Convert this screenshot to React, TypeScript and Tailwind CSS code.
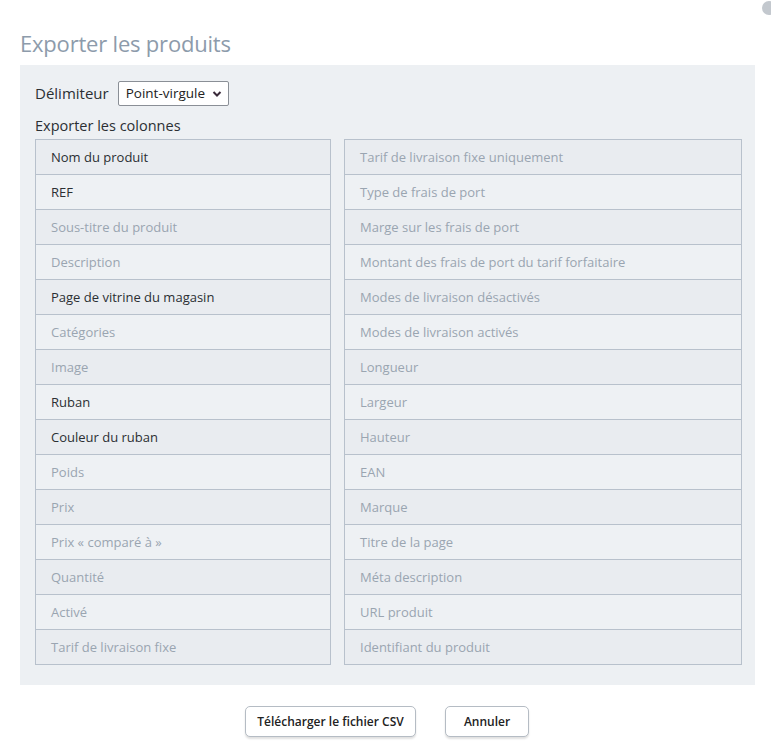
const leftCols = [
  { label: "Nom du produit", on: true },
  { label: "REF", on: true },
  { label: "Sous-titre du produit", on: false },
  { label: "Description", on: false },
  { label: "Page de vitrine du magasin", on: true },
  { label: "Catégories", on: false },
  { label: "Image", on: false },
  { label: "Ruban", on: true },
  { label: "Couleur du ruban", on: true },
  { label: "Poids", on: false },
  { label: "Prix", on: false },
  { label: "Prix « comparé à »", on: false },
  { label: "Quantité", on: false },
  { label: "Activé", on: false },
  { label: "Tarif de livraison fixe", on: false },
];

const rightCols = [
  { label: "Tarif de livraison fixe uniquement", on: false },
  { label: "Type de frais de port", on: false },
  { label: "Marge sur les frais de port", on: false },
  { label: "Montant des frais de port du tarif forfaitaire", on: false },
  { label: "Modes de livraison désactivés", on: false },
  { label: "Modes de livraison activés", on: false },
  { label: "Longueur", on: false },
  { label: "Largeur", on: false },
  { label: "Hauteur", on: false },
  { label: "EAN", on: false },
  { label: "Marque", on: false },
  { label: "Titre de la page", on: false },
  { label: "Méta description", on: false },
  { label: "URL produit", on: false },
  { label: "Identifiant du produit", on: false },
];

type Col = { label: string; on: boolean };

const ColumnList = ({ items, width }: { items: Col[]; width: string }) => {
  return (
    <div className={`${width} border border-[#b8c1cc] bg-[#eef1f4]`}>
      {items.map((item, index) => (
        <div
          key={index}
          className={`flex items-center pl-[15px] pt-[1px] text-[13px] ${index > 0 ? "border-t border-[#b8c1cc] h-[35px]" : "h-[34px]"} ${index % 2 === 0 ? "bg-[#e9ecf0]" : "bg-[#eef1f4]"} ${item.on ? "text-[#2b2f33]" : "text-[#9aa5b1]"}`}
        >
          {item.label}
        </div>
      ))}
    </div>
  );
};

const App = () => {
  return (
    <div className="relative w-[771px] h-[748px] bg-white overflow-hidden font-['Open_Sans',sans-serif]">
      <div className="absolute left-[762px] top-[1px] w-[14px] h-[14px] rounded-full bg-[#c3c8ce]" />

      <h1 className="pl-[20px] pt-[28px] h-[65px] text-[22px] text-[#8d9bab] leading-[30px] tracking-[-0.2px]">
        Exporter les produits
      </h1>

      <div className="mx-[20px] w-[735px] bg-[#edf0f3] pl-[15px] pr-[13px] pt-[16px] pb-[20px]">
        <div className="flex items-center gap-[9px] h-[25px]">
          <span className="text-[15px] text-[#2b2f33]">Délimiteur</span>
          <div className="w-[111px] h-[25px] border border-[#8a8f96] rounded-[2px] bg-white flex items-center justify-between pl-[7px] pr-[6px] text-[13.5px] text-[#222]">
            <span>Point-virgule</span>
            <svg width="10" height="8" viewBox="0 0 10 8">
              <path d="M1.5 2 L5 5.5 L8.5 2" fill="none" stroke="#3a2a3a" strokeWidth="2" />
            </svg>
          </div>
        </div>

        <p className="mt-[8px] h-[25px] text-[14.5px] text-[#2b2f33] leading-[24px]">Exporter les colonnes</p>

        <div className="flex gap-[13px]">
          <ColumnList items={leftCols} width="w-[296px]" />
          <ColumnList items={rightCols} width="w-[398px]" />
        </div>
      </div>

      <div className="flex justify-center gap-[29px] mt-[21px] pl-[3px]">
        <button className="w-[171px] h-[31px] border border-[#b5bcc4] rounded-[5px] bg-white text-[12px] font-semibold text-[#222] shadow-[0_2px_2px_rgba(0,0,0,0.12)]">
          Télécharger le fichier CSV
        </button>
        <button className="w-[84px] h-[31px] border border-[#b5bcc4] rounded-[5px] bg-white text-[12px] font-semibold text-[#222] shadow-[0_2px_2px_rgba(0,0,0,0.12)]">
          Annuler
        </button>
      </div>
    </div>
  );
};

export default App;
